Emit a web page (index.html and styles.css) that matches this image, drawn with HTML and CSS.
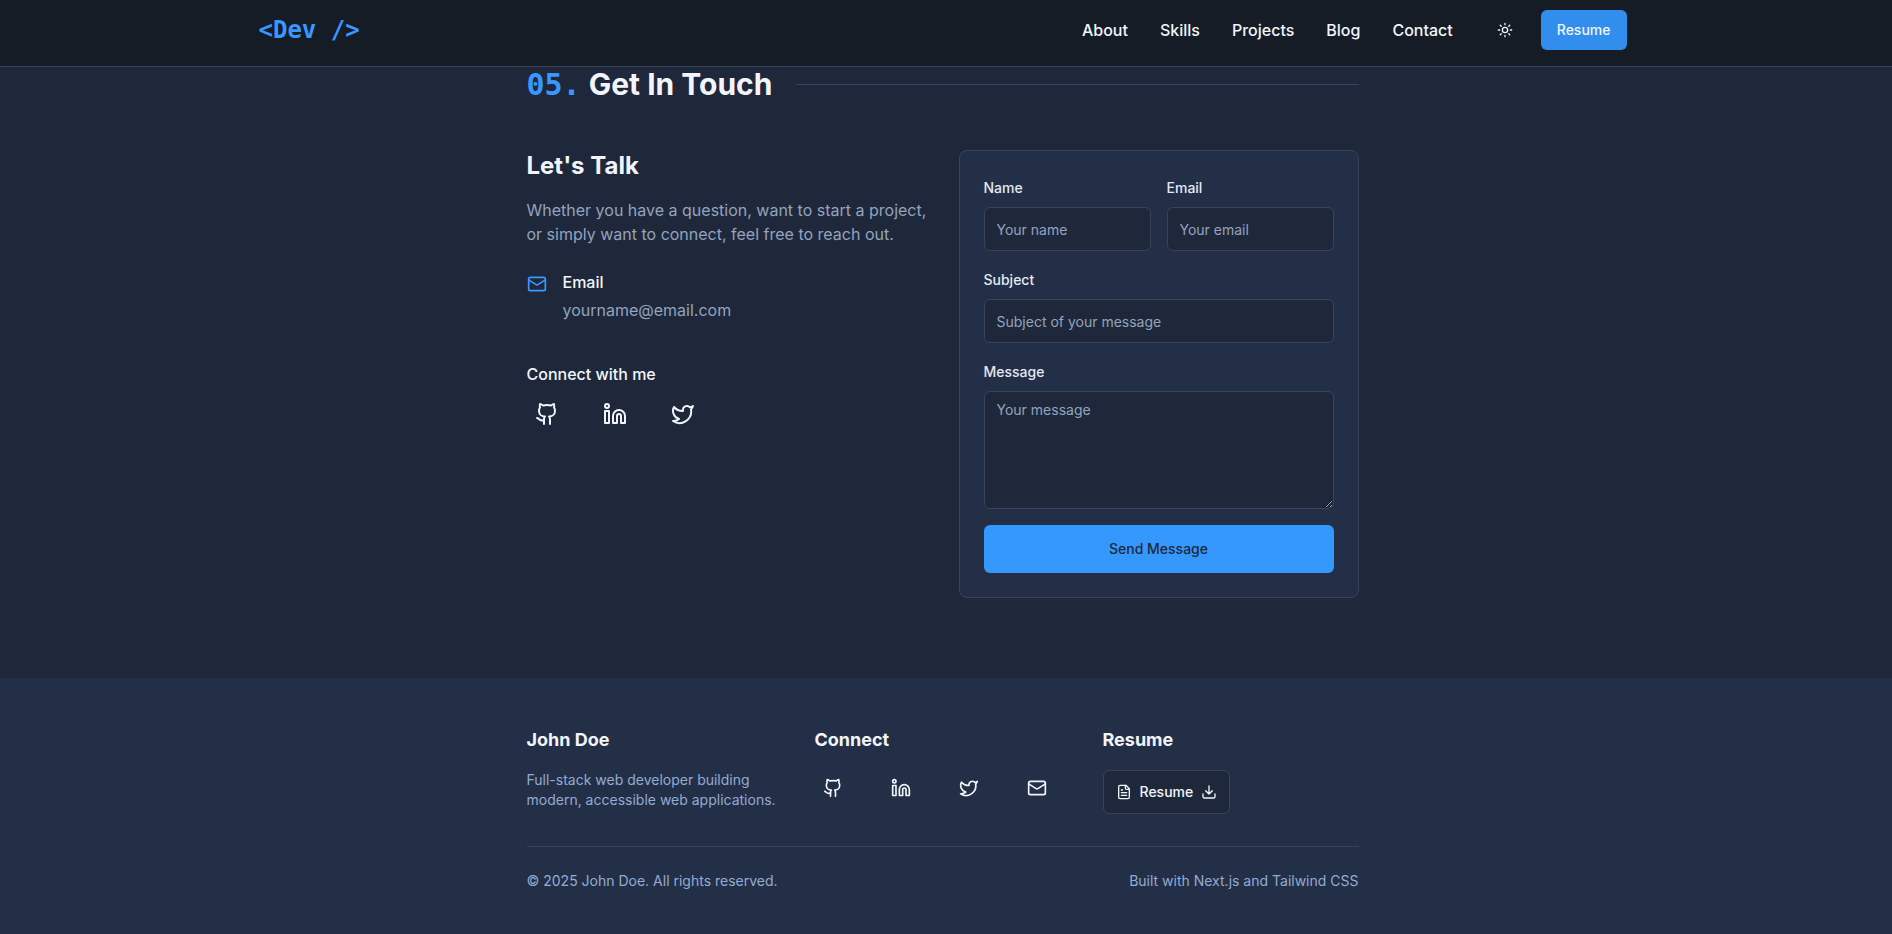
FILE: index.html
```html
<!DOCTYPE html>
<html lang="en">
  <head>
    <meta charset="UTF-8" />
    <meta name="viewport" content="width=device-width, initial-scale=1.0" />
    <title>John Doe | Web Developer</title>
    <link rel="stylesheet" href="styles.css">
  </head>
  <body>
    <!-- icons shared by the contact section and the footer -->
    <svg class="sprite" aria-hidden="true">
      <symbol id="github" viewBox="0 0 24 24">
        <path d="M15 22v-4a4.8 4.8 0 0 0-1-3.5c3 0 6-2 6-5.5.08-1.25-.27-2.48-1-3.5.28-1.15.28-2.35 0-3.5 0 0-1 0-3 1.5-2.64-.5-5.36-.5-8 0C6 2 5 2 5 2c-.3 1.15-.3 2.35 0 3.5A5.403 5.403 0 0 0 4 9c0 3.5 3 5.5 6 5.5-.39.49-.68 1.05-.85 1.65-.17.6-.22 1.23-.15 1.85v4" />
        <path d="M9 18c-4.51 2-5-2-7-2" />
      </symbol>
      <symbol id="linkedin" viewBox="0 0 24 24">
        <path d="M16 8a6 6 0 0 1 6 6v7h-4v-7a2 2 0 0 0-2-2 2 2 0 0 0-2 2v7h-4v-7a6 6 0 0 1 6-6z" />
        <rect width="4" height="12" x="2" y="9" />
        <circle cx="4" cy="4" r="2" />
      </symbol>
      <symbol id="twitter" viewBox="0 0 24 24">
        <path d="M22 4s-.7 2.1-2 3.4c1.6 10-9.4 17.3-18 11.6 2.2.1 4.4-.6 6-2C3 15.5.5 9.6 3 5c2.2 2.6 5.6 4.1 9 4-.9-4.2 4-6.6 7-3.8 1.1 0 3-1.2 3-1.2z" />
      </symbol>
      <symbol id="mail" viewBox="0 0 24 24">
        <rect width="20" height="16" x="2" y="4" rx="2" />
        <path d="m22 7-8.97 5.7a1.94 1.94 0 0 1-2.06 0L2 7" />
      </symbol>
    </svg>

    <header class="header">
      <div class="header-inner">
        <a class="logo" href="#">&lt;Dev /&gt;</a>
        <nav class="nav">
          <a href="#about">About</a>
          <a href="#skills">Skills</a>
          <a href="#projects">Projects</a>
          <a href="#blog">Blog</a>
          <a href="#contact">Contact</a>
          <div class="nav-actions">
            <button type="button" class="theme-toggle" aria-label="Toggle theme">
              <svg class="icon icon-sm" viewBox="0 0 24 24">
                <circle cx="12" cy="12" r="4" />
                <path d="M12 2v2M12 20v2M4.93 4.93l1.41 1.41M17.66 17.66l1.41 1.41M2 12h2M20 12h2M6.34 17.66l-1.41 1.41M19.07 4.93l-1.41 1.41" />
              </svg>
            </button>
            <button type="button" class="resume-btn">Resume</button>
          </div>
        </nav>
      </div>
    </header>

    <main class="contact" id="contact">
      <div class="container">
        <h2 class="section-title"><span class="number">05.</span>Get In Touch</h2>
        <div class="contact-grid">
          <div class="contact-info">
            <h3>Let's Talk</h3>
            <p class="intro">
              Whether you have a question, want to start a project, or simply
              want to connect, feel free to reach out.
            </p>
            <div class="email-row">
              <svg class="icon icon-md"><use href="#mail" /></svg>
              <div>
                <h4>Email</h4>
                <a href="mailto:yourname@email.com">yourname@email.com</a>
              </div>
            </div>
            <h4>Connect with me</h4>
            <div class="social social-lg">
              <a href="#" aria-label="GitHub"><svg class="icon"><use href="#github" /></svg></a>
              <a href="#" aria-label="LinkedIn"><svg class="icon"><use href="#linkedin" /></svg></a>
              <a href="#" aria-label="Twitter"><svg class="icon"><use href="#twitter" /></svg></a>
            </div>
          </div>

          <form class="contact-form">
            <div class="form-row">
              <div class="field">
                <label for="name">Name</label>
                <input type="text" id="name" name="name" placeholder="Your name" />
              </div>
              <div class="field">
                <label for="email">Email</label>
                <input type="email" id="email" name="email" placeholder="Your email" />
              </div>
            </div>
            <div class="field">
              <label for="subject">Subject</label>
              <input type="text" id="subject" name="subject" placeholder="Subject of your message" />
            </div>
            <div class="field">
              <label for="message">Message</label>
              <textarea id="message" name="message" placeholder="Your message"></textarea>
            </div>
            <button type="submit" class="send-btn">Send Message</button>
          </form>
        </div>
      </div>
    </main>

    <footer class="footer">
      <div class="container">
        <div class="footer-grid">
          <div>
            <h3>John Doe</h3>
            <p>Full-stack web developer building modern, accessible web applications.</p>
          </div>
          <div>
            <h3>Connect</h3>
            <div class="social">
              <a href="#" aria-label="GitHub"><svg class="icon icon-md"><use href="#github" /></svg></a>
              <a href="#" aria-label="LinkedIn"><svg class="icon icon-md"><use href="#linkedin" /></svg></a>
              <a href="#" aria-label="Twitter"><svg class="icon icon-md"><use href="#twitter" /></svg></a>
              <a href="#" aria-label="Email"><svg class="icon icon-md"><use href="#mail" /></svg></a>
            </div>
          </div>
          <div>
            <h3>Resume</h3>
            <button type="button" class="download-btn">
              <svg class="icon icon-sm" viewBox="0 0 24 24">
                <path d="M15 2H6a2 2 0 0 0-2 2v16a2 2 0 0 0 2 2h12a2 2 0 0 0 2-2V7Z" />
                <path d="M14 2v4a2 2 0 0 0 2 2h4M10 9H8M16 13H8M16 17H8" />
              </svg>
              Resume
              <svg class="icon icon-sm" viewBox="0 0 24 24">
                <path d="M21 15v4a2 2 0 0 1-2 2H5a2 2 0 0 1-2-2v-4" />
                <path d="m7 10 5 5 5-5M12 15V3" />
              </svg>
            </button>
          </div>
        </div>
        <div class="footer-bottom">
          <p>© 2025 John Doe. All rights reserved.</p>
          <p>Built with Next.js and Tailwind CSS</p>
        </div>
      </div>
    </footer>
  </body>
</html>
```
FILE: styles.css
```css
* {
  box-sizing: border-box;
  margin: 0;
  padding: 0;
}
body {
  display: flex;
  flex-direction: column;
  min-height: 100vh;
  background-color: #1e283a;
  color: #f1f5fb;
  font-family: "Inter", sans-serif;
  font-size: 16px;
  line-height: 24px;
}
a {
  color: inherit;
  text-decoration: none;
}
button,
input,
textarea {
  font-family: inherit;
  font-size: 14px;
  line-height: 20px;
}
button {
  border: none;
  cursor: pointer;
}
.sprite {
  display: none;
}
.icon {
  width: 24px;
  height: 24px;
  flex-shrink: 0;
  fill: none;
  stroke: currentColor;
  stroke-width: 2;
  stroke-linecap: round;
  stroke-linejoin: round;
}
.icon-sm {
  width: 16px;
  height: 16px;
}
.icon-md {
  width: 20px;
  height: 20px;
}

/* header */
.header {
  padding: 10px 39px 16px 32px;
  background-color: #151c26;
  border-bottom: 1px solid #36445a;
}
.header-inner {
  display: flex;
  align-items: center;
  justify-content: space-between;
  max-width: 1368px;
  margin: 0 auto;
}
.logo,
.number {
  color: #3898ff;
  font-family: "DejaVu Sans Mono", monospace;
  font-weight: 700;
}
.logo {
  font-size: 24px;
}
.nav,
.nav-actions {
  display: flex;
  align-items: center;
}
.nav {
  gap: 32px;
  font-weight: 500;
}
.nav-actions {
  gap: 16px;
}
.theme-toggle {
  display: flex;
  align-items: center;
  justify-content: center;
  width: 40px;
  height: 40px;
  background: none;
  color: inherit;
}
.resume-btn {
  height: 40px;
  padding: 0 16px;
  border-radius: 6px;
  background-color: #318eec;
  color: #f1f5fb;
  font-weight: 500;
}

/* contact */
.container {
  max-width: 832px;
  margin: 0 auto;
}
.contact {
  padding: 0 39px 80px 32px;
}
.section-title {
  display: flex;
  align-items: center;
  margin-bottom: 48px;
  font-size: 30px;
  font-weight: 700;
  line-height: 35px;
}
.section-title::after {
  content: "";
  flex: 1;
  height: 1px;
  margin-left: 24px;
  background-color: #36445a;
}
.number {
  margin-right: 8px;
}
.contact-grid {
  display: grid;
  grid-template-columns: 1fr 1fr;
  gap: 32px;
}
.contact-info h3 {
  margin-bottom: 16px;
  font-size: 24px;
  font-weight: 700;
  line-height: 32px;
}
.contact-info h4 {
  font-weight: 500;
}
.intro {
  color: #94a3be;
}
.email-row {
  display: flex;
  gap: 16px;
  margin: 24px 0 40px;
}
.email-row .icon {
  margin-top: 4px;
  color: #3898ff;
}
.email-row a {
  display: block;
  margin-top: 4px;
  color: #94a3be;
}
.social {
  display: flex;
  gap: 32px;
}
.social a {
  display: flex;
  align-items: center;
  justify-content: center;
  width: 36px;
  height: 36px;
}
.social-lg {
  gap: 28px;
  margin-top: 8px;
}
.social-lg a {
  width: 40px;
  height: 40px;
}
.contact-form {
  display: flex;
  flex-direction: column;
  gap: 16px;
  padding: 24px;
  border: 1px solid #36445a;
  border-radius: 8px;
  background-color: #232f46;
}
.form-row {
  display: grid;
  grid-template-columns: 1fr 1fr;
  gap: 16px;
}
.field label {
  display: block;
  margin-bottom: 6px;
  color: #e2e8f4;
  font-size: 14px;
  font-weight: 500;
  line-height: 26px;
}
.field input,
.field textarea {
  display: block;
  width: 100%;
  padding: 8px 12px;
  border: 1px solid #36445a;
  border-radius: 6px;
  background-color: #1e283a;
  color: #f1f5fb;
}
.field input {
  height: 44px;
}
.field textarea {
  height: 118px;
  resize: vertical;
}
.field ::placeholder {
  color: #94a3be;
}
.send-btn {
  height: 48px;
  border-radius: 6px;
  background-color: #3498ff;
  color: #1e283a;
  font-weight: 500;
}

/* footer */
.footer {
  flex: 1;
  padding: 48px 39px 40px 32px;
  background-color: #232f46;
}
.footer-grid {
  display: grid;
  grid-template-columns: repeat(3, 1fr);
  gap: 32px;
  padding-bottom: 32px;
  border-bottom: 1px solid #36445a;
}
.footer h3 {
  margin-bottom: 16px;
  font-size: 18px;
  font-weight: 700;
  line-height: 28px;
}
.footer p {
  color: #93abd3;
  font-size: 14px;
  line-height: 20px;
}
.download-btn {
  display: flex;
  align-items: center;
  gap: 8px;
  height: 44px;
  padding: 0 12px;
  border: 1px solid #36445a;
  border-radius: 6px;
  background-color: #1e283a;
  color: #f1f5fb;
  font-weight: 500;
}
.footer-bottom {
  display: flex;
  justify-content: space-between;
  padding-top: 24px;
}
```
